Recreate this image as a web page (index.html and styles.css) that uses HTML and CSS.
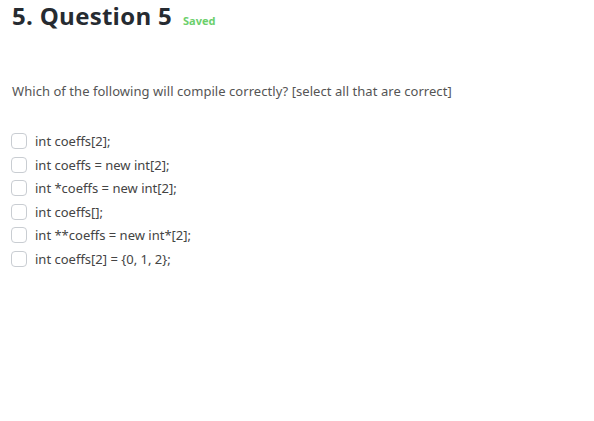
FILE: index.html
```html
<!DOCTYPE html>
<html>
<head>
<meta charset="utf-8">
<link rel="stylesheet" href="styles.css">
</head>
<body>
<div class="question">
  <div class="q-head">
    <h1 class="q-title">5. Question 5</h1>
    <span class="q-status">Saved</span>
  </div>
  <p class="q-text">Which of the following will compile correctly? [select all that are correct]</p>
  <ul class="options">
    <li class="option"><span class="box"></span><span class="label">int coeffs[2];</span></li>
    <li class="option"><span class="box"></span><span class="label">int coeffs = new int[2];</span></li>
    <li class="option"><span class="box"></span><span class="label">int *coeffs = new int[2];</span></li>
    <li class="option"><span class="box"></span><span class="label">int coeffs[];</span></li>
    <li class="option"><span class="box"></span><span class="label">int **coeffs = new int*[2];</span></li>
    <li class="option"><span class="box"></span><span class="label">int coeffs[2] = {0, 1, 2};</span></li>
  </ul>
</div>
</body>
</html>
```
FILE: styles.css
```css
html, body {
  margin: 0;
  padding: 0;
  background: #ffffff;
}
body {
  font-family: "Noto Sans", "Open Sans", sans-serif;
  color: #333;
}
.question {
  padding: 1px 12px 0 12px;
}
.q-head {
  display: flex;
  align-items: baseline;
  gap: 11px;
}
.q-title {
  margin: 0;
  font-family: "Open Sans", "Noto Sans", sans-serif;
  font-size: 24px;
  font-weight: 700;
  letter-spacing: 0.3px;
  color: #262b31;
  line-height: 30px;
}
.q-status {
  font-size: 11px;
  font-weight: 700;
  color: #6ccf6c;
}
.q-text {
  margin: 51px 0 0 0;
  font-size: 13px;
  line-height: 18px;
  color: #555;
  letter-spacing: 0.05px;
}
.options {
  list-style: none;
  margin: 33px 0 0 0;
  padding: 0;
  display: flex;
  flex-direction: column;
  gap: 7.6px;
}
.option {
  display: flex;
  align-items: center;
  height: 16px;
}
.box {
  width: 14px;
  height: 14px;
  border: 1px solid #c9cdd2;
  border-radius: 4px;
  margin-left: -1px;
  margin-right: 8px;
  flex: none;
}
.label {
  font-size: 13px;
  color: #444;
  line-height: 16px;
}
```
